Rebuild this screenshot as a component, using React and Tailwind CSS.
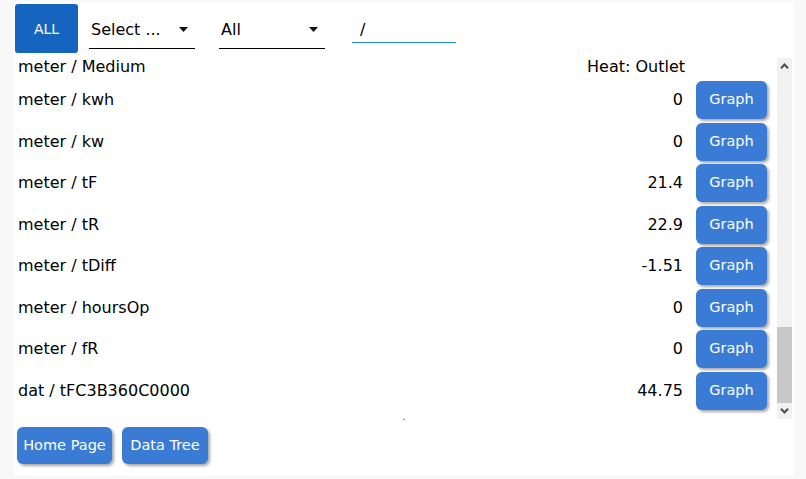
import { useLayoutEffect, useRef } from 'react'

const groups = [
  {
    name: 'Heat: Inlet',
    rows: [
      ['kwh', '1532'],
      ['kw', '2.4'],
      ['tF', '45.1'],
      ['tR', '38.6'],
      ['tDiff', '6.5'],
      ['hoursOp', '8760'],
      ['fR', '0.32'],
    ],
  },
  {
    name: 'Cool: Inlet',
    rows: [
      ['kwh', '412'],
      ['kw', '0'],
      ['tF', '12.3'],
      ['tR', '16.8'],
      ['tDiff', '-4.5'],
      ['hoursOp', '1204'],
      ['fR', '0'],
    ],
  },
  {
    name: 'Cool: Outlet',
    rows: [
      ['kwh', '0'],
      ['kw', '0'],
      ['tF', '18.2'],
      ['tR', '19.0'],
      ['tDiff', '-0.8'],
      ['hoursOp', '0'],
      ['fR', '0'],
    ],
  },
  {
    name: 'Heat: Outlet',
    rows: [
      ['kwh', '0'],
      ['kw', '0'],
      ['tF', '21.4'],
      ['tR', '22.9'],
      ['tDiff', '-1.51'],
      ['hoursOp', '0'],
      ['fR', '0'],
    ],
  },
]

const extra = [['dat', 'tFC3B360C0000', '44.75']]

const btn = 'rounded-[6px] bg-[#3a7bd5] text-white text-[14.5px] shadow-[2px_2px_3px_rgba(0,0,0,0.35)]'

function DataRow({ label, value }) {
  return (
    <div className="flex items-center h-[41.5px] pl-[4px] pr-[10px]">
      <div className="flex-1">{label}</div>
      <div className="pr-[13px] text-right">{value}</div>
      <button className={`w-[71px] h-[38px] ${btn}`}>Graph</button>
    </div>
  )
}

function Select({ text }) {
  return (
    <div className="w-[106px] h-[45px] border-b border-black flex items-center justify-between pl-[2px] pr-[7px] pt-[7px]">
      <span>{text}</span>
      <svg width="9" height="5" viewBox="0 0 9 5">
        <polygon points="0,0 9,0 4.5,5" fill="#111" />
      </svg>
    </div>
  )
}

function Chevron({ down }) {
  return (
    <svg width="9" height="6" viewBox="0 0 9 6" className={down ? 'rotate-180' : ''}>
      <polyline points="1,5.2 4.5,1.6 8,5.2" fill="none" stroke="#505050" strokeWidth="2.2" />
    </svg>
  )
}

export default function App() {
  const listRef = useRef(null)

  useLayoutEffect(() => {
    if (listRef.current) listRef.current.scrollTop = listRef.current.scrollHeight
  }, [])

  return (
    <div className="w-full h-[479px] bg-[#f8f8f8] pt-[2px] pl-[14px] text-black text-[16px] font-['DejaVu_Sans',sans-serif]">
      <div className="w-[780px] h-[474px] bg-white flex flex-col">
        {/* Filters */}
        <div className="flex items-start pt-[2px] pl-[1px]">
          <button className="w-[63px] h-[49px] rounded-[3px] bg-[#1565c0] text-white text-[14px] pt-[1px]">ALL</button>
          <div className="ml-[11px]">
            <Select text="Select ..." />
          </div>
          <div className="ml-[24px]">
            <Select text="All" />
          </div>
          <div className="ml-[27px] w-[104px] h-[39px] border-b border-[#2187c2] flex items-center pl-[8px] pt-[13px]">
            /
          </div>
        </div>

        {/* Values */}
        <div className="flex mt-[2px]">
          <div ref={listRef} className="flex-1 h-[365px] overflow-y-scroll [scrollbar-width:none]">
            {groups.map((g) => (
              <div key={g.name}>
                <div className="flex items-center h-[28px] pt-[3px] pl-[4px] pr-[92px]">
                  <div className="flex-1">meter / Medium</div>
                  <div>{g.name}</div>
                </div>
                {g.rows.map(([k, v]) => (
                  <DataRow key={k} label={`meter / ${k}`} value={v} />
                ))}
              </div>
            ))}
            {extra.map(([a, b, v]) => (
              <DataRow key={b} label={`${a} / ${b}`} value={v} />
            ))}
            <div className="h-[8px]" />
          </div>

          {/* Scrollbar */}
          <div className="w-[15px] h-[361px] mt-[3px] mr-[2px] bg-[#f1f1f1] flex flex-col">
            <div className="h-[16px] flex items-center justify-center">
              <Chevron />
            </div>
            <div className="flex-1 flex flex-col justify-end">
              <div className="h-[76px] bg-[#c8c8c8]" />
            </div>
            <div className="h-[16px] flex items-center justify-center">
              <Chevron down />
            </div>
          </div>
        </div>

        <div className="h-[7px] -mt-[6px] text-center text-[10px] leading-[6px] text-[#444]">.</div>

        {/* Navigation */}
        <div className="flex gap-[10px] pl-[3px] pt-[6px]">
          <button className={`w-[95px] h-[37px] ${btn}`}>Home Page</button>
          <button className={`w-[86px] h-[37px] ${btn}`}>Data Tree</button>
        </div>
      </div>
    </div>
  )
}
